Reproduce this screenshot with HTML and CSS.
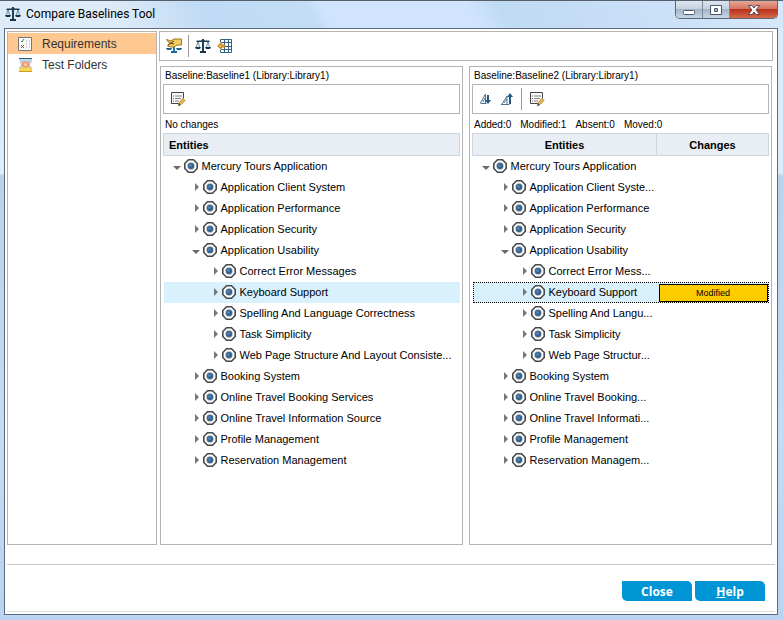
FILE: index.html
```
<!DOCTYPE html>
<html lang="en">
<head>
    <meta charset="utf-8">
    <title>Compare Baselines Tool</title>
    <link rel="stylesheet" href="styles.css">
</head>
<body>
    <svg class="sprite" aria-hidden="true">
        <symbol id="scales" viewBox="0 0 16 16">
            <path d="M3 3L1.500 9M3 3l1.500 6M13 3l-1.500 6M13 3l1.500 6" stroke="#6f8ea2" fill="none"/>
            <path d="M8 1v13" stroke="#1f4157" stroke-width="2"/>
            <path d="M1 4l1-1.500h4L8 1l2 1.500h4L15 4z" fill="#1f4157"/>
            <path d="M0 9h6l-1 2H1zM10 9h6l-1 2h-4zM5 13h6v2H5z" fill="#17364c"/>
        </symbol>
        <symbol id="compare" viewBox="0 0 16 16">
            <path d="M8 6v8" stroke="#2d78a8" stroke-width="2" fill="none"/>
            <path d="M0 10h6l-1 2H1zM10 10h6l-1 2h-4zM5 13h6v2H5z" fill="#1d6595"/>
            <path d="M.500 1.500L5 3l3-2h7.500v6H11L8 9H5L1.500 8l2-2.500z" fill="#f3cd62" stroke="#9a7418"/>
            <path d="M2 7l6-4M4 5l4 1" stroke="#5b430d" fill="none"/>
        </symbol>
        <symbol id="grid" viewBox="0 0 16 16">
            <path d="M3.500 4V1.500h11v13h-11V12M4 4.500h11M7 8.500h8M4 11.500h11M7.500 1v14M11.500 1v14" fill="none" stroke="#35627f"/>
            <path d="M.700 8L4 4.800V7h4v2H4v2.200z" fill="#f0b64c" stroke="#b87516"/>
        </symbol>
        <symbol id="details" viewBox="0 0 16 16">
            <path d="M9 12.500H1.500V1.500h12v6" fill="#f7f7f7" stroke="#444"/>
            <path d="M3 5h1M3 7.500h1M3 10h1" stroke="#666"/>
            <path d="M5 5h7M5 7.500h6M5 10h4" stroke="#888"/>
            <path d="M8.500 14.500l1-3 3.500-4 2 2-4 4z" fill="#f1bd4a" stroke="#b5832b"/>
            <path d="M8 15l1-3 2 2z" fill="#555"/>
        </symbol>
        <symbol id="next" viewBox="0 0 14 14">
            <path d="M1.500 11.500h6M1.500 11L6.500 2v9M4 10l2-4" fill="none" stroke="#4c7590"/>
            <path d="M8 3h2v5h2l-3 4-3-4h2z" fill="#1d5a85"/>
        </symbol>
        <symbol id="previous" viewBox="0 0 14 14">
            <path d="M1 12.500h8.500M2 12l5-8v8M4 11l3-4" fill="none" stroke="#4c7590"/>
            <path d="M9 12h2V5h2l-3-4-3 4h2z" fill="#1d5a85"/>
        </symbol>
        <symbol id="req" viewBox="0 0 14 14">
            <path d="M4.500 .800h5l3.700 3.700v5l-3.700 3.700h-5L.800 9.500v-5z" fill="#fff" stroke="#46484c" stroke-width="1.600"/>
            <circle cx="7" cy="7" r="3.700" fill="#9fa8b2"/>
            <circle cx="7" cy="7" r="3" fill="#2f5f8c"/>
            <circle cx="6.500" cy="6.500" r="1.500" fill="#4f86b6"/>
        </symbol>
        <symbol id="open" viewBox="0 0 9 9">
            <path d="M1 4h8L5 8z" fill="#6b6b6b"/>
        </symbol>
        <symbol id="closed" viewBox="0 0 9 9">
            <path d="M4 0v8l4-4z" fill="#777"/>
        </symbol>
    </svg>

    <div class="window">
        <header class="titlebar">
            <svg class="icon"><use href="#scales"/></svg>
            <h1 class="title">Compare Baselines Tool</h1>
            <div class="window-buttons">
                <button class="window-button" aria-label="Minimize"><svg width="14" height="12"><rect x="1.500" y="6.500" width="11" height="4" rx="1" fill="#fff" stroke="#50586a"/></svg></button>
                <button class="window-button" aria-label="Maximize"><svg width="14" height="12"><path d="M1.500 1.500h11v9h-11zM5.500 4.500v3h3v-3z" fill="#fff" fill-rule="evenodd" stroke="#50586a"/></svg></button>
                <button class="window-button window-close" aria-label="Close window"><svg width="14" height="12"><path d="M1.500 1.500h3.500L7 4l2-2.500h3.500L9 6l3.500 4.500H9L7 8l-2 2.500H1.500L5 6z" fill="#fff" stroke="#5d4a58"/></svg></button>
            </div>
        </header>

        <div class="client">
            <div class="workspace">
                <nav class="sidebar">
                    <a class="nav-item active" href="#requirements">
                        <svg class="icon" viewBox="0 0 16 16"><path d="M1.500 1.500h13v13h-13z" fill="#fbfbfb" stroke="#777"/><path d="M4 5l1 1 2-3" fill="none" stroke="#3b8a4d"/><path d="M4 9l3 3M7 9l-3 3" stroke="#c22f2f"/><path d="M9 5h1M12 5h1M9 8h1M12 8h1M9 11h1M12 11h1" stroke="#999"/></svg>
                        Requirements
                    </a>
                    <a class="nav-item" href="#folders">
                        <svg class="icon" viewBox="0 0 16 16"><path d="M2 1h13v4H3z" fill="#bfd9e8"/><path d="M2 1.500h13" stroke="#2c617f"/><path d="M2 10h13v5H2z" fill="#f8d64e"/><path d="M2 14.500h13" stroke="#c99b22"/><path d="M3 5l2 3-2 2h11l-2-2 2-3z" fill="#f1eef0" stroke="#b9bcc6"/><ellipse cx="8.500" cy="7.500" rx="4" ry="3" fill="#f29a72"/><circle cx="8.500" cy="7.500" r="1.500" fill="#fbd3bd"/></svg>
                        Test Folders
                    </a>
                </nav>

                <main class="content">
                    <div class="toolbar main-toolbar">
                        <button class="tool" aria-label="Select baselines"><svg class="icon"><use href="#compare"/></svg></button>
                        <span class="separator"></span>
                        <button class="tool" aria-label="Compare"><svg class="icon"><use href="#scales"/></svg></button>
                        <button class="tool" aria-label="Export"><svg class="icon"><use href="#grid"/></svg></button>
                    </div>

                    <div class="panels">
                        <section class="panel">
                            <h2 class="panel-title">Baseline:Baseline1 (Library:Library1)</h2>
                            <div class="toolbar">
                                <button class="tool" aria-label="Details"><svg class="icon"><use href="#details"/></svg></button>
                            </div>
                            <p class="summary">No changes</p>
                            <table class="tree">
                                <thead>
                                    <tr><th class="left">Entities</th></tr>
                                </thead>
                                <tbody>
                                    <tr><td><div class="node"><svg class="arrow"><use href="#open"/></svg><svg class="req"><use href="#req"/></svg>Mercury Tours Application</div></td></tr>
                                    <tr><td><div class="node level1"><svg class="arrow"><use href="#closed"/></svg><svg class="req"><use href="#req"/></svg>Application Client System</div></td></tr>
                                    <tr><td><div class="node level1"><svg class="arrow"><use href="#closed"/></svg><svg class="req"><use href="#req"/></svg>Application Performance</div></td></tr>
                                    <tr><td><div class="node level1"><svg class="arrow"><use href="#closed"/></svg><svg class="req"><use href="#req"/></svg>Application Security</div></td></tr>
                                    <tr><td><div class="node level1"><svg class="arrow"><use href="#open"/></svg><svg class="req"><use href="#req"/></svg>Application Usability</div></td></tr>
                                    <tr><td><div class="node level2"><svg class="arrow"><use href="#closed"/></svg><svg class="req"><use href="#req"/></svg>Correct Error Messages</div></td></tr>
                                    <tr class="selected"><td><div class="node level2"><svg class="arrow"><use href="#closed"/></svg><svg class="req"><use href="#req"/></svg>Keyboard Support</div></td></tr>
                                    <tr><td><div class="node level2"><svg class="arrow"><use href="#closed"/></svg><svg class="req"><use href="#req"/></svg>Spelling And Language Correctness</div></td></tr>
                                    <tr><td><div class="node level2"><svg class="arrow"><use href="#closed"/></svg><svg class="req"><use href="#req"/></svg>Task Simplicity</div></td></tr>
                                    <tr><td><div class="node level2"><svg class="arrow"><use href="#closed"/></svg><svg class="req"><use href="#req"/></svg>Web Page Structure And Layout Consiste...</div></td></tr>
                                    <tr><td><div class="node level1"><svg class="arrow"><use href="#closed"/></svg><svg class="req"><use href="#req"/></svg>Booking System</div></td></tr>
                                    <tr><td><div class="node level1"><svg class="arrow"><use href="#closed"/></svg><svg class="req"><use href="#req"/></svg>Online Travel Booking Services</div></td></tr>
                                    <tr><td><div class="node level1"><svg class="arrow"><use href="#closed"/></svg><svg class="req"><use href="#req"/></svg>Online Travel Information Source</div></td></tr>
                                    <tr><td><div class="node level1"><svg class="arrow"><use href="#closed"/></svg><svg class="req"><use href="#req"/></svg>Profile Management</div></td></tr>
                                    <tr><td><div class="node level1"><svg class="arrow"><use href="#closed"/></svg><svg class="req"><use href="#req"/></svg>Reservation Management</div></td></tr>
                                </tbody>
                            </table>
                        </section>

                        <section class="panel">
                            <h2 class="panel-title">Baseline:Baseline2 (Library:Library1)</h2>
                            <div class="toolbar">
                                <button class="tool" aria-label="Next change"><svg class="icon small"><use href="#next"/></svg></button>
                                <button class="tool" aria-label="Previous change"><svg class="icon small"><use href="#previous"/></svg></button>
                                <span class="separator"></span>
                                <button class="tool" aria-label="Details"><svg class="icon"><use href="#details"/></svg></button>
                            </div>
                            <p class="summary"><span>Added:0</span><span>Modified:1</span><span>Absent:0</span><span>Moved:0</span></p>
                            <table class="tree">
                                <thead>
                                    <tr><th>Entities</th><th class="changes">Changes</th></tr>
                                </thead>
                                <tbody>
                                    <tr><td><div class="node"><svg class="arrow"><use href="#open"/></svg><svg class="req"><use href="#req"/></svg>Mercury Tours Application</div></td><td></td></tr>
                                    <tr><td><div class="node level1"><svg class="arrow"><use href="#closed"/></svg><svg class="req"><use href="#req"/></svg>Application Client Syste...</div></td><td></td></tr>
                                    <tr><td><div class="node level1"><svg class="arrow"><use href="#closed"/></svg><svg class="req"><use href="#req"/></svg>Application Performance</div></td><td></td></tr>
                                    <tr><td><div class="node level1"><svg class="arrow"><use href="#closed"/></svg><svg class="req"><use href="#req"/></svg>Application Security</div></td><td></td></tr>
                                    <tr><td><div class="node level1"><svg class="arrow"><use href="#open"/></svg><svg class="req"><use href="#req"/></svg>Application Usability</div></td><td></td></tr>
                                    <tr><td><div class="node level2"><svg class="arrow"><use href="#closed"/></svg><svg class="req"><use href="#req"/></svg>Correct Error Mess...</div></td><td></td></tr>
                                    <tr class="selected focused"><td><div class="node level2"><svg class="arrow"><use href="#closed"/></svg><svg class="req"><use href="#req"/></svg>Keyboard Support</div></td><td><div class="modified">Modified</div></td></tr>
                                    <tr><td><div class="node level2"><svg class="arrow"><use href="#closed"/></svg><svg class="req"><use href="#req"/></svg>Spelling And Langu...</div></td><td></td></tr>
                                    <tr><td><div class="node level2"><svg class="arrow"><use href="#closed"/></svg><svg class="req"><use href="#req"/></svg>Task Simplicity</div></td><td></td></tr>
                                    <tr><td><div class="node level2"><svg class="arrow"><use href="#closed"/></svg><svg class="req"><use href="#req"/></svg>Web Page Structur...</div></td><td></td></tr>
                                    <tr><td><div class="node level1"><svg class="arrow"><use href="#closed"/></svg><svg class="req"><use href="#req"/></svg>Booking System</div></td><td></td></tr>
                                    <tr><td><div class="node level1"><svg class="arrow"><use href="#closed"/></svg><svg class="req"><use href="#req"/></svg>Online Travel Booking...</div></td><td></td></tr>
                                    <tr><td><div class="node level1"><svg class="arrow"><use href="#closed"/></svg><svg class="req"><use href="#req"/></svg>Online Travel Informati...</div></td><td></td></tr>
                                    <tr><td><div class="node level1"><svg class="arrow"><use href="#closed"/></svg><svg class="req"><use href="#req"/></svg>Profile Management</div></td><td></td></tr>
                                    <tr><td><div class="node level1"><svg class="arrow"><use href="#closed"/></svg><svg class="req"><use href="#req"/></svg>Reservation Managem...</div></td><td></td></tr>
                                </tbody>
                            </table>
                        </section>
                    </div>
                </main>
            </div>

            <footer class="footer">
                <button class="action">Close</button>
                <button class="action"><u>H</u>elp</button>
            </footer>
        </div>
    </div>
</body>
</html>
```
FILE: styles.css
```
* {
    box-sizing: border-box;
}

body {
    margin: 0;
    font-family: "Liberation Sans", Arial, sans-serif;
    font-size: 11px;
    color: #000;
}

button {
    margin: 0;
    padding: 0;
    border: none;
    background: none;
    font: inherit;
    cursor: pointer;
}

.sprite {
    display: none;
}

.icon {
    display: block;
    flex: none;
    width: 16px;
    height: 16px;
}

.icon.small {
    width: 14px;
    height: 14px;
}

.window {
    display: flex;
    flex-direction: column;
    min-height: 100vh;
    padding: 0 5px 5px 4px;
    border-top: 1px solid #55606c;
    background: linear-gradient(#dbe9f9, #deedfc 172px, #b9d1ea 175px, #c6dbf5 70%, #b9d3f0);
}

.titlebar {
    display: flex;
    align-items: flex-start;
    height: 27px;
    margin: 0 -5px 0 -4px;
    padding: 0 5px;
    background: linear-gradient(60deg, #deebf9 15%, #bfdaf4 27%, #c3ddf6 40%, #d0e5fd 42%, #d0e5fd 60%, #bfdaf3 64%, #c8dff7 80%, #d8e8fa);
}

.titlebar .icon {
    margin-top: 5px;
}

.title {
    flex: 1;
    margin: 0 0 0 5px;
    font-family: Roboto, sans-serif;
    font-size: 12px;
    font-weight: normal;
    line-height: 27px;
}

.window-buttons {
    display: flex;
    border: 1px solid #5c6878;
    border-top: none;
    border-radius: 0 0 5px 5px;
    overflow: hidden;
}

.window-button {
    display: flex;
    align-items: center;
    justify-content: center;
    width: 27px;
    height: 17px;
    border-right: 1px solid #7c8896;
    background: linear-gradient(#dbe5ef, #c3d0de 50%, #a5b5c8 50%, #c4d5e6);
}

.window-close {
    width: 47px;
    border-right: none;
    background: linear-gradient(#e7a697, #d3705c 50%, #b8301b 50%, #d8684a);
}

.client {
    display: flex;
    flex: 1;
    flex-direction: column;
    padding: 2px;
    border: 1px solid #5e6b7c;
    background: #fff;
}

.workspace {
    display: flex;
    flex: 1;
    gap: 2px;
    padding-right: 2px;
}

.sidebar {
    width: 150px;
    padding: 1px 0;
    border: 1px solid #b4b4b4;
}

.nav-item {
    display: flex;
    align-items: center;
    gap: 9px;
    height: 21px;
    padding-left: 9px;
    color: #333;
    font-size: 12px;
    text-decoration: none;
}

.nav-item.active {
    background: #ffc891;
}

.content {
    display: flex;
    flex: 1;
    flex-direction: column;
    gap: 5px;
    min-width: 0;
}

.toolbar {
    display: flex;
    align-items: center;
    gap: 7px;
    height: 30px;
    padding-left: 6px;
    border: 1px solid #b4b4b4;
}

.main-toolbar {
    gap: 6px;
}

.separator {
    width: 1px;
    height: 22px;
    background: #9a9a9a;
}

.panels {
    display: flex;
    flex: 1;
    gap: 6px;
    padding: 0 1px;
}

.panel {
    flex: 1;
    min-width: 0;
    padding: 0 2px;
    border: 1px solid #b4b4b4;
}

.panel-title,
.summary {
    margin: 0;
    padding-left: 2px;
    font-size: 10px;
    font-weight: normal;
    line-height: 17px;
}

.summary {
    display: flex;
    gap: 9px;
    padding-top: 2px;
}

.tree {
    width: 100%;
    border-collapse: collapse;
    table-layout: fixed;
}

.tree th {
    height: 22px;
    padding: 0;
    border: 1px solid #ccd6de;
    background: #e8eef3;
}

.tree .left {
    padding-left: 5px;
    text-align: left;
}

.tree .changes {
    width: 112px;
}

.tree td {
    height: 21px;
    padding: 0;
}

.node {
    display: flex;
    align-items: center;
    height: 19px;
    padding-left: 8px;
    white-space: nowrap;
}

.level1 {
    padding-left: 27px;
}

.level2 {
    padding-left: 46px;
}

.arrow {
    flex: none;
    width: 9px;
    height: 9px;
    margin-right: 3px;
}

.req {
    flex: none;
    width: 14px;
    height: 14px;
    margin-right: 4px;
}

.selected {
    background: #d8f1fd;
}

.focused {
    outline: 1px dotted #000;
    outline-offset: -1px;
}

.modified {
    height: 18px;
    margin: 1px 1px 0 2px;
    border: 1px solid #000;
    background: #fc0;
    font-size: 9px;
    line-height: 16px;
    text-align: center;
}

.footer {
    display: flex;
    justify-content: flex-end;
    gap: 3px;
    height: 48px;
    margin-top: 19px;
    padding: 16px 10px 0 0;
    border-top: 1px solid #c8c8c8;
    border-bottom: 1px solid #ddd;
}

.action {
    width: 70px;
    height: 20px;
    border-radius: 0 5px 0 5px;
    background: #0096d6;
    color: #fff;
    font-family: "Open Sans", sans-serif;
    font-size: 12px;
    font-weight: bold;
}
```
